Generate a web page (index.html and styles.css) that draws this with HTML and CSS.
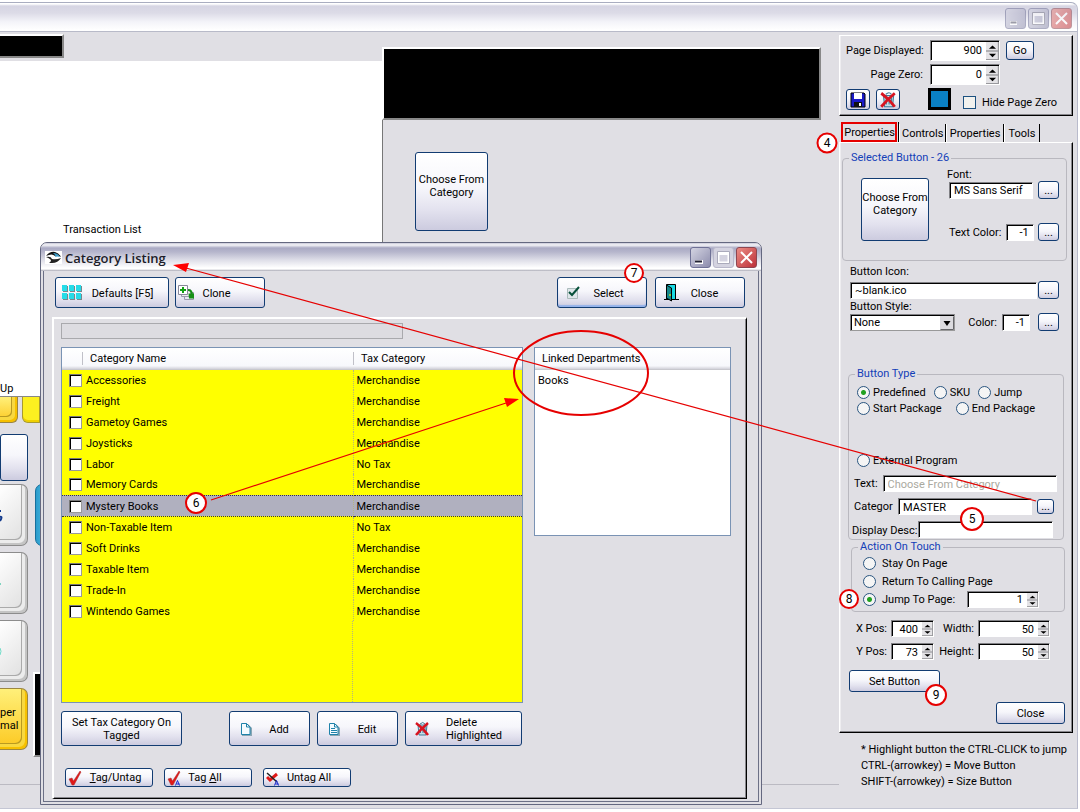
FILE: index.html
```html
<!DOCTYPE html>
<html lang="en">
<head>
<meta charset="utf-8">
<title>Category Listing</title>
<link rel="stylesheet" href="styles.css">
</head>
<body>
<svg class="defs" width="0" height="0" aria-hidden="true">
  <symbol id="spin" viewBox="0 0 11 16" preserveAspectRatio="none"><path d="M0 0h11v16h-11z" fill="#e4e3e6"/><path d="M0 8h11" stroke="#88888c"/><path d="M10.500 0v16M0 15.500h11" stroke="#99999d"/><path d="M2.500 6l3-3 3 3zM2.500 10.500h6l-3 3z" fill="#000"/></symbol>
  <symbol id="trash" viewBox="0 0 16 16"><path d="M4 4h9l-1 10H5z" fill="#c6dde8" stroke="#3f7d98"/><path d="M6 3q3-3 5 0M6.500 6v6M9 6v6M11 6v6" fill="none" stroke="#3f7d98"/><path d="M2 2q7 5 12 12M14 2Q7 8 2 14" fill="none" stroke="#d81420" stroke-width="2.500"/></symbol>
  <symbol id="check" viewBox="0 0 14 16"><path d="M1 9l3-1 1.500 3L12 1l1 1-7 13H4z" fill="#e01818" stroke="#a33" stroke-width=".5"/></symbol>
  <symbol id="page" viewBox="0 0 12 14"><path d="M2 2h6l4 4v8H2z" fill="#8aa6b4"/><path d="M1.500 1.500h5l3.500 3.500v7.500H1.500z" fill="#f4fbff" stroke="#1f82aa"/><path d="M6.500 1.500V5H10" fill="none" stroke="#1f82aa"/></symbol>
</svg>

<main class="window">
  <header class="titlebar">
    <div class="winbtns faded">
      <button class="wb" aria-label="Minimize"><svg width="19" height="19"><path d="M4 14h7" stroke="#fff" stroke-width="4"/><path d="M4.500 13.500h6" stroke="#556" stroke-width="2"/></svg></button>
      <button class="wb" aria-label="Maximize"><svg width="19" height="19"><path d="M4.500 4.500h10v10h-10zM4 6h11" fill="none" stroke="#fff" stroke-width="2"/><path d="M3.500 3.500h12v12h-12z" fill="none" stroke="#778"/></svg></button>
      <button class="wb wb-close" aria-label="Close window"><svg width="19" height="19"><path d="M4 4l11 11M15 4L4 15" stroke="#fff" stroke-width="2"/></svg></button>
    </div>
  </header>

  <div class="content">
    <section class="canvas">
      <div class="display-small"></div>
      <div class="receipt"><span class="receipt-title">Transaction List</span><span class="receipt-up">Up</span></div>
      <div class="display-large"></div>
      <div class="stage"><button class="btn pad stage-btn">Choose From Category</button></div>
      <div class="keys">
        <div class="key-row"><span class="key orange stub"></span><span class="key yellow stub"></span></div>
        <button class="btn key-plain" aria-label="Key"></button>
        <button class="key gray" aria-label="Key"><svg width="6" height="14"><path d="M0 3h1M0 9q3-1 0 4" stroke="#123a8c" stroke-width="2" fill="none"/></svg></button>
        <button class="key gray" aria-label="Key"><svg width="6" height="14"><path d="M0 8h1" stroke="#7fd4c0" stroke-width="2"/></svg></button>
        <button class="key gray" aria-label="Key"><svg width="6" height="14"><path d="M0 4q2 3 0 7" stroke="#6fdcc8" fill="none"/></svg></button>
        <button class="key orange super">per<br>mal</button>
      </div>
      <div class="cyan-key"></div>
      <div class="display-side"></div>
      <div class="canvas-rule"></div>
    </section>

    <aside class="side">
      <section class="raised page-box">
        <div class="row">
          <label class="lab-right" for="pd">Page Displayed:</label>
          <span class="spin w70 tall"><input id="pd" value="900"><svg><use href="#spin"/></svg></span>
          <button class="btn go">Go</button>
        </div>
        <div class="row">
          <label class="lab-right" for="pz">Page Zero:</label>
          <span class="spin w70 tall"><input id="pz" value="0"><svg><use href="#spin"/></svg></span>
        </div>
        <div class="row tools">
          <button class="btn icon-btn" aria-label="Save"><svg width="16" height="16" viewBox="0 0 16 16"><path d="M1 1h13l1 1v13H1z" fill="#1a1ac8" stroke="#000"/><path d="M4 1h8v6H4z" fill="#fff"/><path d="M4 10h8v5H4z" fill="#111"/><path d="M9 11h2v3H9z" fill="#fff"/></svg></button>
          <button class="btn icon-btn" aria-label="Delete"><svg width="18" height="18"><use href="#trash"/></svg></button>
          <span class="swatch"></span>
          <label class="check-label"><input type="checkbox" class="xp-check">Hide Page Zero</label>
        </div>
      </section>

      <nav class="tabs">
        <button class="tab active">Properties</button><button class="tab">Controls</button><button class="tab">Properties</button><button class="tab">Tools</button>
      </nav>

      <section class="raised props">
        <fieldset class="group selected">
          <legend>Selected Button - 26</legend>
          <div class="selected-grid">
            <button class="btn pad preview">Choose From Category</button>
            <div class="font-area">
              <label for="fn">Font:</label>
              <div class="line"><input class="field w84" id="fn" value="MS Sans Serif"><button class="btn dots">...</button></div>
              <div class="line color-line"><label for="tc">Text Color:</label><input class="field w28 num" id="tc" value="-1"><button class="btn dots">...</button></div>
            </div>
          </div>
        </fieldset>

        <div class="icon-area">
          <label for="bi">Button Icon:</label>
          <div class="line"><input class="field grow" id="bi" value="~blank.ico"><button class="btn dots">...</button></div>
          <label for="bs">Button Style:</label>
          <div class="line style-line">
            <span class="select-wrap"><select id="bs"><option>None</option></select><svg width="14" height="14"><path d="M0 0h14v14H0z" fill="#dcdbdf"/><path d="M.5 13.500h13V.5" fill="none" stroke="#66666a"/><path d="M3.500 5h7L7 10z"/></svg></span>
            <label for="bc" class="push">Color:</label><input class="field w28 num" id="bc" value="-1"><button class="btn dots">...</button>
          </div>
        </div>

        <fieldset class="group type">
          <legend>Button Type</legend>
          <div class="radios"><label><input type="radio" name="t" checked>Predefined</label><label><input type="radio" name="t">SKU</label><label><input type="radio" name="t">Jump</label></div>
          <div class="radios wide"><label><input type="radio" name="t">Start Package</label><label><input type="radio" name="t">End Package</label></div>
          <div class="radios external"><label><input type="radio" name="t">External Program</label></div>
          <div class="form-line"><label for="tx">Text:</label><input class="field dim" id="tx" value="Choose From Category"></div>
          <div class="form-line"><label for="ca" class="cat-label">Categor</label><input class="field w134" id="ca" value="MASTER"><button class="btn dots small">...</button></div>
          <div class="form-line desc"><label for="dd">Display Desc:</label><input class="field" id="dd"></div>
        </fieldset>

        <fieldset class="group action">
          <legend>Action On Touch</legend>
          <div class="radios"><label><input type="radio" name="a">Stay On Page</label></div>
          <div class="radios"><label><input type="radio" name="a">Return To Calling Page</label></div>
          <div class="radios"><label><input type="radio" name="a" checked>Jump To Page:</label><span class="spin w72"><input aria-label="Jump page" value="1"><svg><use href="#spin"/></svg></span></div>
        </fieldset>

        <div class="pos-grid">
          <label for="xp">X Pos:</label><span class="spin"><input id="xp" value="400"><svg><use href="#spin"/></svg></span>
          <label for="wi">Width:</label><span class="spin"><input id="wi" value="50"><svg><use href="#spin"/></svg></span>
          <label for="yp">Y Pos:</label><span class="spin"><input id="yp" value="73"><svg><use href="#spin"/></svg></span>
          <label for="he">Height:</label><span class="spin"><input id="he" value="50"><svg><use href="#spin"/></svg></span>
        </div>
        <button class="btn set-btn">Set Button</button>
        <button class="btn close-btn">Close</button>
      </section>

      <p class="notes">* Highlight button the CTRL-CLICK to jump<br>CTRL-(arrowkey) = Move Button<br>SHIFT-(arrowkey) = Size Button</p>
    </aside>
  </div>
</main>

<section class="dialog" role="dialog" aria-labelledby="dlg">
  <header class="dialog-title">
    <svg width="17" height="13" viewBox="0 0 17 13"><path d="M0 0h17v13H0z" fill="#fff"/><path d="M1 5Q5 0 10 1q4 1 6 5-3-2-6-1Q7 2 1 5z" fill="#111"/><path d="M8 2q5 0 7 4-3-1-5 0Q11 4 8 2z" fill="#3f9cc8"/><path d="M1 6q5-1 6 2 4 1 9-1-3 5-9 5H4q2-1 2-3Q4 7 1 6z" fill="#222"/></svg>
    <h1 id="dlg">Category Listing</h1>
    <div class="winbtns">
      <button class="wb" aria-label="Minimize"><svg width="19" height="19"><path d="M4 14h8" stroke="#fff" stroke-width="4"/><path d="M4 13.500h7" stroke="#223" stroke-width="2"/></svg></button>
      <button class="wb off" aria-label="Maximize"><svg width="19" height="19"><path d="M4.500 4.500h10v10h-10zM4 6h11" fill="none" stroke="#fff" stroke-width="2"/><path d="M3.500 3.500h12v12h-12z" fill="none" stroke="#aab"/></svg></button>
      <button class="wb wb-close" aria-label="Close dialog"><svg width="19" height="19"><path d="M4 4l11 11M15 4L4 15" stroke="#fff" stroke-width="2"/></svg></button>
    </div>
  </header>
  <div class="dialog-body">
    <div class="toolbar">
      <button class="btn tool w114"><svg width="21" height="16"><path d="M1 1h5v6H1zM8 1h5v6H8zM15 1h5v6h-5zM1 9h5v6H1zM8 9h5v6H8zM15 9h5v6h-5z" fill="#78868c"/><path d="M0 0h5v6H0zM7 0h5v6H7zM14 0h5v6h-5zM0 8h5v6H0zM7 8h5v6H7zM14 8h5v6h-5z" fill="#25dce8"/></svg><span>Defaults [F5]</span></button>
      <button class="btn tool clone w90"><svg width="17" height="16"><path d="M6.500 7.500h9v7h-9z" fill="#e8e8f2" stroke="#99a"/><path d="M3.500 4.500h9v7h-9z" fill="#eee" stroke="#99a"/><path d="M.5.500h9v9h-9z" fill="#fff" stroke="#889"/><path d="M5 2v6M2 5h6" stroke="#12a012" stroke-width="2"/><path d="M10 5q4 0 4 5" fill="none" stroke="#159015" stroke-width="2"/><path d="M10.500 8.500l5.500 0v5h-5z" fill="#159015"/></svg><span>Clone</span></button>
      <button class="btn tool select w90"><svg width="14" height="14"><path d="M.5 2.500h10v10h-10z" fill="#dfe6ea" stroke="#abb"/><path d="M2 6l3 3 7-8" fill="none" stroke="#06503a" stroke-width="2"/></svg><span>Select</span></button>
      <button class="btn tool close w90"><svg width="15" height="18"><path d="M0 15.500h15" stroke="#000"/><path d="M2.500.500h9v15h-9z" fill="#19dbe4" stroke="#000"/><path d="M2.500 1l5 3v13l-5-3z" fill="#16888a" stroke="#000"/><path d="M6 10v2" stroke="#ff0"/></svg><span>Close</span></button>
    </div>
    <div class="dialog-panel">
      <input class="search" aria-label="Search" disabled>
      <div class="lists">
        <div class="list-box cats">
          <table>
            <thead><tr><th class="c-name"><span>Category Name</span></th><th><span>Tax Category</span></th></tr></thead>
            <tbody>
              <tr><td><label><input type="checkbox">Accessories</label></td><td>Merchandise</td></tr>
              <tr><td><label><input type="checkbox">Freight</label></td><td>Merchandise</td></tr>
              <tr><td><label><input type="checkbox">Gametoy Games</label></td><td>Merchandise</td></tr>
              <tr><td><label><input type="checkbox">Joysticks</label></td><td>Merchandise</td></tr>
              <tr><td><label><input type="checkbox">Labor</label></td><td>No Tax</td></tr>
              <tr><td><label><input type="checkbox">Memory Cards</label></td><td>Merchandise</td></tr>
              <tr class="sel"><td><label><input type="checkbox">Mystery Books</label></td><td>Merchandise</td></tr>
              <tr><td><label><input type="checkbox">Non-Taxable Item</label></td><td>No Tax</td></tr>
              <tr><td><label><input type="checkbox">Soft Drinks</label></td><td>Merchandise</td></tr>
              <tr><td><label><input type="checkbox">Taxable Item</label></td><td>Merchandise</td></tr>
              <tr><td><label><input type="checkbox">Trade-In</label></td><td>Merchandise</td></tr>
              <tr><td><label><input type="checkbox">Wintendo Games</label></td><td>Merchandise</td></tr>
            </tbody>
          </table>
          <div class="filler"><span></span></div>
        </div>
        <div class="list-box depts">
          <table><thead><tr><th>Linked Departments</th></tr></thead><tbody><tr><td>Books</td></tr></tbody></table>
        </div>
      </div>
      <div class="actions">
        <button class="btn set-tax">Set Tax Category On Tagged</button>
        <button class="btn act"><svg width="12" height="14"><use href="#page"/></svg><span>Add</span></button>
        <button class="btn act"><svg width="12" height="14"><use href="#page"/><path d="M3 6.500h4M3 8.500h6M3 10.500h6" stroke="#1f82aa"/></svg><span>Edit</span></button>
        <button class="btn act del"><svg width="16" height="16"><use href="#trash"/></svg><span>Delete Highlighted</span></button>
      </div>
      <div class="tags">
        <button class="btn tag"><svg width="14" height="16"><use href="#check"/></svg><span><u>T</u>ag/Untag</span></button>
        <button class="btn tag tag-all"><svg width="14" height="16"><use href="#check"/><path d="M8.500 15.500l2-5 2 5M9.500 14h3" fill="none" stroke="#1828d0"/></svg><span>Tag <u>A</u>ll</span></button>
        <button class="btn tag untag-all"><svg width="14" height="16"><path d="M1 7l3 3 7-6" fill="none" stroke="#e01818" stroke-width="3"/><path d="M1 3l10 9" stroke="#222" stroke-width="1.500"/><path d="M8.500 15.500l2-5 2 5M9.500 14h3" fill="none" stroke="#1828d0"/></svg><span>Unta<u>g</u> All</span></button>
      </div>
    </div>
  </div>
</section>

<svg class="marks" width="1080" height="812" viewBox="0 0 1080 812">
  <g fill="none" stroke="#e60000">
    <path d="M1036 501L186 268M211 500L506 403" stroke-width="1.200"/>
    <ellipse cx="581" cy="373" rx="67" ry="42" stroke-width="2"/>
    <path d="M842 123h54v18h-54z" stroke-width="2"/>
  </g>
  <path d="M173 265L189 263 186 272zM519 399L504 398 507 407z" fill="#f00"/>
  <g fill="#fff" stroke="#e60000" stroke-width="2">
    <circle cx="827" cy="143" r="9.500"/><circle cx="972" cy="519" r="11"/><circle cx="196" cy="503" r="10"/><circle cx="634" cy="273" r="9"/><circle cx="849" cy="599" r="9"/><circle cx="936" cy="695" r="10"/>
  </g>
  <g class="mark-text">
    <text x="827" y="147">4</text><text x="972" y="523">5</text><text x="196" y="507">6</text><text x="634" y="277">7</text><text x="849" y="603">8</text><text x="936" y="699">9</text>
  </g>
</svg>
</body>
</html>
```

FILE: styles.css
```css
* { box-sizing: border-box; }
body { margin: 0; min-height: 100vh; background: #fff; position: relative; overflow: hidden; color: #000; font: 11px/13px Roboto, "Liberation Sans", sans-serif; }
button, input, select { font: inherit; color: inherit; margin: 0; }
button { padding: 0; cursor: pointer; }
svg { flex: none; }
.defs { position: absolute; }

/* main window */
.window { margin: 2px 2px 0 0; min-height: 807px; display: flex; flex-direction: column; border-top: 1px solid #a9adc0; border-right: 1px solid #b9bbcc; border-bottom: 1px solid #c4c6d4; border-top-right-radius: 7px; background: #e0dfe4; }
.titlebar { height: 29px; display: flex; justify-content: flex-end; padding: 5px 5px 0 0; border-bottom: 1px solid #b8bac8; border-top-right-radius: 7px; background: linear-gradient(#fff 0, #fff 1px, #d6d5e3 3px, #dcdbe7 10px, #f4f4f9 19px, #fff 27px); }
.winbtns { display: flex; gap: 2px; }
.wb { width: 21px; height: 21px; border: 1px solid #6f7196; border-radius: 3px; background: linear-gradient(135deg, #d4d4e2, #8d8dad); display: flex; align-items: center; justify-content: center; }
.wb.off { background: #d4d3e0; border-color: #b9b8cb; }
.wb-close { background: linear-gradient(135deg, #eb8d85, #bd3038); border-color: #8e4650; }
.faded .wb { opacity: .55; }
.content { flex: 1; display: flex; }

/* screen designer canvas */
.canvas { flex: 1; position: relative; overflow: hidden; }
.display-small { position: absolute; left: 0; top: 2px; width: 64px; height: 24px; background: #000; border: 2px solid #888; border-top-color: #fff; border-left: 0; }
.receipt { position: absolute; left: 0; top: 29px; width: 382px; height: 336px; background: #fff; border-bottom: 1px solid #888; }
.receipt-title { position: absolute; left: 63px; top: 162px; }
.receipt-up { position: absolute; left: 0; top: 321px; }
.display-large { position: absolute; left: 382px; right: 18px; top: 15px; height: 73px; background: #000; border: 2px solid #888; border-top-color: #fff; border-left-color: #fff; }
.stage { position: absolute; left: 382px; right: 18px; top: 88px; bottom: 40px; padding: 32px; border-left: 1px solid #777; }
.keys { position: absolute; left: 0; top: 365px; width: 44px; display: flex; flex-direction: column; }
.key-row { display: flex; gap: 4px; margin-bottom: 11px; }
.key { border: 1px solid #8c8c8c; border-left: 0; border-radius: 0 7px 7px 0; width: 28px; height: 62px; margin-bottom: 6px; padding: 0; text-align: left; display: flex; align-items: center; box-shadow: inset -2px -2px 0 #c4c4c4, inset -5px -5px 0 #ececec, inset -6px -6px 0 #aaa; }
.gray { background: linear-gradient(135deg, #fff, #ddd); }
.orange { background: linear-gradient(#fff07a, #fcc820); border-color: #9c8640; box-shadow: inset -2px -2px 0 #f6c000, inset -5px -5px 0 #f8d840, inset -6px -6px 0 #b99a20; }
.yellow { background: #fdf020; border-color: #a89a30; box-shadow: inset 0 -2px 0 #f0d000; }
.key.stub { width: 18px; height: 26px; margin: 0; border-top: 0; border-radius: 0 0 6px 0; }
.key.yellow { border-left: 1px solid #a89a30; border-radius: 0 0 0 6px; }
.key-plain { width: 28px; height: 47px; margin-bottom: 3px; border-left: 0; border-radius: 0 3px 3px 0; }
.cyan-key { position: absolute; left: 35px; top: 452px; width: 20px; height: 62px; border: 1px solid #186f9c; border-radius: 7px; background: linear-gradient(90deg, #2a9ccc, #6fd6f4); }
.display-side { position: absolute; left: 33px; top: 640px; width: 60px; height: 85px; background: #000; border: 2px solid #fff; border-bottom-color: #888; }
.canvas-rule { position: absolute; left: 0; right: 0; bottom: 23px; border-top: 1px solid #bbbac2; }

/* shared controls */
.btn { border: 1px solid #123c72; border-radius: 3px; background: linear-gradient(#fff 0, #f6f6fb 45%, #e2e1ee 75%, #cccbdf 100%); display: flex; align-items: center; justify-content: center; text-align: center; }
.pad { align-items: flex-start; }
.stage-btn { width: 73px; height: 79px; padding-top: 20px; }
.field, .spin, .select-wrap { border: 1px solid #fff; border-top-color: #808084; border-left-color: #808084; background: #fff; box-shadow: inset 1px 1px 0 #000; border-radius: 0; }
.field { height: 17px; min-width: 0; padding: 1px 1px 0 4px; }
.num, .spin input { text-align: right; }
.num { padding-right: 4px; }
.dim { color: #aaa9a0; }
.grow { flex: 1; }
.w28 { width: 28px; } .w84 { width: 84px; } .w134 { width: 134px; }
.dots { width: 21px; height: 18px; }
.dots.small { width: 17px; height: 15px; }
.spin { display: flex; height: 17px; padding: 1px 0 0 1px; }
.spin input { flex: 1; min-width: 0; width: 20px; border: 0; padding: 0 4px 0 0; background: none; }
.spin svg { width: 11px; height: 100%; }
.tall { height: 21px; }
.tall svg { width: 13px; }
.w70 { width: 70px; } .w72 { width: 72px; }
.xp-check { appearance: none; width: 13px; height: 13px; border: 1px solid #1c5180; background: #f2f2ee; }
input[type=radio] { appearance: none; width: 13px; height: 13px; border-radius: 50%; border: 1px solid #2a5580; background: #f5f5f5; flex: none; }
input[type=radio]:checked { background: radial-gradient(circle, #21a121 0, #21a121 2px, #f5f5f5 3px); }

/* side panel */
.side { width: 238px; padding: 3px 4px 0 0; display: flex; flex-direction: column; }
.raised { border: 1px solid #000; border-top-color: #fff; border-left-color: #fff; box-shadow: inset -1px -1px 0 #88878c, inset 1px 0 0 #eeedf0; }
.page-box { height: 81px; padding: 2px 0 0 6px; }
.row { display: flex; height: 24px; align-items: center; }
.lab-right { width: 77px; text-align: right; margin-right: 7px; white-space: nowrap; }
.go { width: 28px; height: 19px; margin-left: 6px; }
.tools { height: 27px; }
.icon-btn { width: 24px; height: 21px; margin-right: 6px; }
.swatch { width: 23px; height: 22px; margin: -2px 0 0 22px; border: 3px solid #000; background: #0a80c4; }
.check-label { display: flex; align-items: center; gap: 6px; margin: 5px 0 0 12px; }
.tabs { display: flex; margin: 6px 0 0 2px; height: 20px; }
.tab { margin-top: 2px; padding: 0 2px; border: 0; border-left: 1px solid #fff; border-right: 1px solid #000; background: none; width: 36px; }
.tab.active { margin-top: 0; width: 58px; padding: 0; border-left: 0; }
.tab:nth-child(2) { width: 47px; } .tab:nth-child(3) { width: 58px; }
.props { height: 591px; padding: 8px 5px 0 2px; display: flex; flex-direction: column; }
.group { margin: 0; border: 1px solid #b9b8bf; border-radius: 4px; min-width: 0; padding: 0; }
.group legend { margin-left: 6px; padding: 0 2px; color: #1340b8; height: 14px; }
.selected { height: 110px; }
.selected-grid { display: flex; padding: 3px 7px 0 18px; justify-content: space-between; }
.preview { width: 68px; height: 63px; margin-top: 10px; padding-top: 12px; }
.font-area { width: 112px; }
.line { display: flex; align-items: center; justify-content: space-between; }
.font-area > .line { padding-left: 2px; }
.font-area label { white-space: nowrap; }
.color-line { margin-top: 24px; }
.icon-area { padding: 4px 8px 0 8px; }
.icon-area > label { display: block; }
.icon-area .line { margin: 3px 0 1px; gap: 1px; }
.icon-area .style-line { margin: 0; }
.icon-area .style-line .field { margin: 0 7px 0 4px; }
.push { margin-left: auto; }
.select-wrap { position: relative; width: 105px; height: 17px; padding: 1px; border-color: #808084 #999 #999 #808084; }
.select-wrap select { appearance: none; width: 100%; height: 13px; line-height: 13px; border: 0; padding: 0 2px; background: none; display: block; }
.select-wrap svg { position: absolute; right: 0; top: 1px; pointer-events: none; }
.type { margin: 36px 3px 0 6px; height: 173px; padding: 0 6px 0 3px; }
.radios { display: flex; align-items: center; gap: 8px; height: 16px; padding-left: 5px; white-space: nowrap; }
.radios label { display: flex; align-items: center; gap: 3px; }
.type legend { margin-left: 3px; }
.type legend + .radios { margin-top: 3px; }
.wide { gap: 14px; }
.external { margin: 36px 0 4px; }
.form-line { display: flex; align-items: center; height: 23px; gap: 5px; padding-left: 2px; }
.form-line label { white-space: nowrap; }
.form-line .field { flex: 1; }
.form-line .w134 { flex: 0 0 134px; }
.form-line .cat-label { width: 39px; }
.desc { padding: 0 4px 0 0; gap: 1px; }
.desc label { padding-top: 1px; }
.action { margin: 0 2px 0 9px; height: 72px; padding: 0 4px 0 6px; }
.action legend { margin-left: 0; }
.action .radios { height: 18px; }
.action .radios label { gap: 6px; }
.action .spin { margin-left: 4px; }
.pos-grid { display: grid; grid-template-columns: 32px 43px 36px 72px; column-gap: 4px; row-gap: 6px; align-items: center; padding: 8px 0 0 13px; white-space: nowrap; }
.pos-grid label { text-align: right; }
.set-btn { width: 91px; height: 22px; margin: 10px 0 0 7px; }
.close-btn { width: 69px; height: 22px; margin: 10px 2px 0 auto; }
.notes { margin: 9px 0 0 22px; line-height: 16px; white-space: nowrap; }

/* dialog */
.dialog { position: absolute; left: 40px; top: 242px; width: 722px; border: 1px solid #646880; border-radius: 7px 7px 0 0; background: #e0dfe4; padding: 0 2px 2px; }
.dialog-title { height: 28px; margin: 0 -2px; padding: 4px 4px 0 4px; display: flex; border-radius: 6px 6px 0 0; background: linear-gradient(#c8c8d8 0, #f4f4f8 2px, #aaaac4 5px, #b6b6cc 9px, #dedee8 17px, #fff 25px, #fff 26px, #a8a8b4 28px); }
.dialog-title > svg { margin: 4px 3px 0 0; }
.dialog-title h1 { flex: 1; margin: 0; font: 600 13px/22px "Open Sans", "Noto Sans", sans-serif; color: #1c1c28; }
.dialog-body { border: 1px solid #6c7086; border-top: 0; padding: 6px 11px 2px 8px; }
.toolbar { display: flex; gap: 6px; padding: 0 2px 0 3px; }
.tool { height: 31px; justify-content: flex-start; padding-left: 6px; }
.tool span { flex: 1; padding: 1px 6px 0 0; }
.w114 { width: 114px; } .w90 { width: 90px; }
.tool.clone { padding-left: 2px; }
.clone span { padding-right: 26px; }
.tool.select { margin-left: auto; padding-left: 9px; box-shadow: inset 0 -2px 1px #94b2ea; }
.tool.close { margin-left: 2px; padding-left: 8px; }
.select span { padding-right: 10px; }
.close span { padding-right: 14px; }
.dialog-panel { margin-top: 9px; height: 482px; border: 1px solid #000; border-top: 2px solid #fff; border-left: 2px solid #fff; box-shadow: inset -1px -1px 0 #88878c; padding: 4px 15px 0 7px; }
.search { display: block; width: 342px; height: 16px; border: 1px solid #a9a9ad; background: #dddce1; padding: 0; }
.lists { display: flex; gap: 11px; margin-top: 8px; align-items: flex-start; }
.list-box { border: 1px solid #7a93b4; background: #fff; }
.cats { flex: 0 0 462px; height: 356px; background: #ff0; display: flex; flex-direction: column; }
.depts { flex: 1; height: 189px; }
table { width: 100%; border-collapse: collapse; table-layout: fixed; }
th { height: 21px; padding: 0 7px; font-weight: normal; text-align: left; background: linear-gradient(#fff, #f7f8fc 85%, #d2d2da); border-bottom: 1px solid #c8c8ce; }
.cats th { padding: 0; }
.cats th span { display: block; border-left: 1px solid #c0c0c8; padding-left: 7px; }
.c-name { width: 291px; }
.cats .c-name span { margin-left: 20px; }
td { height: 21px; padding: 1px 3px 0; }
.cats td:first-child { padding-left: 7px; border-right: 1px dotted #b5b580; }
.cats label { display: flex; align-items: center; gap: 4px; }
.cats input { appearance: none; width: 13px; height: 13px; background: #fff; border: 1px solid #999; border-top-color: #777; border-left-color: #777; box-shadow: inset 1px 1px 0 #000; }
.sel td { background: #b0b0bf; border-top: 1px dotted #334; border-bottom: 1px dotted #334; }
.filler { flex: 1; display: flex; }
.filler span { width: 291px; border-right: 1px dotted #b5b580; }
.actions { display: flex; gap: 7px; margin-top: 8px; }
.actions .btn { height: 35px; }
.actions .set-tax { width: 121px; margin-right: 40px; padding: 0 8px; }
.act { width: 81px; padding-left: 10px; justify-content: flex-start; }
.act span { flex: 1; padding: 2px 3px 0 0; }
.act.del { width: 117px; padding-left: 8px; }
.del span { padding: 0 30px 0 16px; text-align: left; }
.tags { display: flex; gap: 11px; margin: 22px 0 0 4px; }
.tag { width: 88px; height: 19px; justify-content: flex-start; padding-left: 2px; }
.tag span { flex: 1; padding-right: 3px; }
.tag-all span { padding-right: 22px; }
.untag-all span { padding-right: 12px; }

/* tutorial marks */
.marks { position: absolute; left: 0; top: 0; pointer-events: none; }
.mark-text { font: 12px Roboto, sans-serif; text-anchor: middle; }
```
